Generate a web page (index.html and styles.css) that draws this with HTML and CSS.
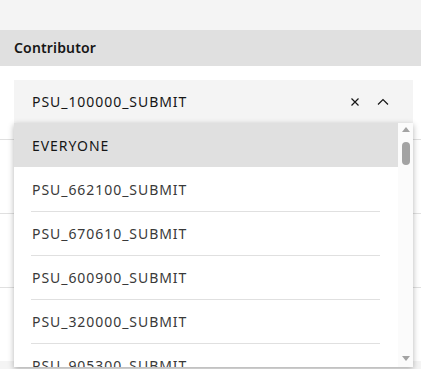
FILE: index.html
```html
<!DOCTYPE html>
<html lang="en">
<head>
	<meta charset="UTF-8">
	<title>Contributor</title>
	<link rel="stylesheet" href="styles.css">
</head>
<body>
	<div class="top"></div>
	<div class="section-head">Contributor</div>
	<div class="field-wrap">
		<div class="field">
			<span class="field-value">PSU_100000_SUBMIT</span>
			<span class="field-icons">
				<svg width="16" height="16" viewBox="0 0 16 16"><path d="M4.5 4.5L11.5 11.5M11.5 4.5L4.5 11.5" stroke="#161616" stroke-width="1.2" fill="none"/></svg>
				<svg width="16" height="16" viewBox="0 0 16 16"><path d="M3 10.5L8 5.5L13 10.5" stroke="#161616" stroke-width="1.2" fill="none"/></svg>
			</span>
		</div>
		<div class="menu">
			<ul class="menu-list">
				<li class="menu-item active"><div class="menu-text">EVERYONE</div></li>
				<li class="menu-item"><div class="menu-text">PSU_662100_SUBMIT</div></li>
				<li class="menu-item"><div class="menu-text">PSU_670610_SUBMIT</div></li>
				<li class="menu-item"><div class="menu-text">PSU_600900_SUBMIT</div></li>
				<li class="menu-item"><div class="menu-text">PSU_320000_SUBMIT</div></li>
				<li class="menu-item"><div class="menu-text">PSU_905300_SUBMIT</div></li>
			</ul>
			<div class="scrollbar">
				<span class="arrow-up"></span>
				<span class="thumb"></span>
				<span class="spacer"></span>
				<span class="arrow-down"></span>
			</div>
		</div>
	</div>
	<div class="rows">
		<div class="row first"></div>
		<div class="row"></div>
		<div class="row"></div>
		<div class="row last"></div>
	</div>
	<div class="footer"></div>
</body>
</html>
```

FILE: styles.css
```css
*{
	margin: 0;
	padding: 0;
	box-sizing: border-box;
}
ul{
	list-style: none;
}
body{
	background: #fff;
	font-family: "Noto Sans", "Open Sans", sans-serif;
	font-size: 14px;
	color: #161616;
	height: 369px;
	overflow: hidden;
}
.top{
	height: 30px;
	background: #f4f4f4;
}
.section-head{
	height: 36px;
	line-height: 36px;
	background: #e0e0e0;
	padding-left: 14px;
	font-weight: 600;
	letter-spacing: 0.16px;
}
.field-wrap{
	position: relative;
	padding: 14px 8px 0 14px;
	z-index: 2;
}
.field{
	height: 44px;
	background: #f4f4f4;
	border-bottom: 1px solid #c6c6c6;
	display: flex;
	align-items: center;
	padding: 0 22px 0 18px;
	letter-spacing: 0.95px;
}
.field-value{
	flex: 1;
}
.field-icons{
	display: flex;
	gap: 12px;
}
.field-icons svg{
	display: block;
}
.menu{
	position: absolute;
	left: 14px;
	right: 8px;
	top: 57px;
	height: 244px;
	background: #fff;
	box-shadow: 0 2px 6px rgba(0, 0, 0, 0.3);
	display: flex;
	overflow: hidden;
}
.menu-list{
	flex: 1;
}
.menu-item{
	height: 44px;
	padding: 0 18px 0 17px;
	color: #393939;
	letter-spacing: 0.95px;
}
.menu-item.active{
	background: #e0e0e0;
	color: #161616;
}
.menu-text{
	height: 44px;
	line-height: 43px;
	padding-left: 1px;
	border-top: 1px solid #e0e0e0;
}
.menu-item.active .menu-text,
.menu-item.active + .menu-item .menu-text{
	border-top-color: transparent;
}
.scrollbar{
	width: 15px;
	display: flex;
	flex-direction: column;
	align-items: center;
	padding: 4px 0 6px;
	background: #fbfbfb;
}
.arrow-up, .arrow-down{
	width: 0;
	height: 0;
	border-left: 4px solid transparent;
	border-right: 4px solid transparent;
}
.arrow-up{
	border-bottom: 5px solid #a3a3a3;
}
.arrow-down{
	border-top: 5px solid #a3a3a3;
}
.thumb{
	width: 8px;
	height: 23px;
	margin-top: 10px;
	border-radius: 4px;
	background: #a3a3a3;
}
.spacer{
	flex: 1;
}
.row{
	height: 74px;
	border-bottom: 1px solid #e0e0e0;
}
.row.first{
	height: 16px;
}
.row.last{
	height: 73px;
	border-bottom: none;
}
.footer{
	height: 20px;
	background: #f4f4f4;
}
```
